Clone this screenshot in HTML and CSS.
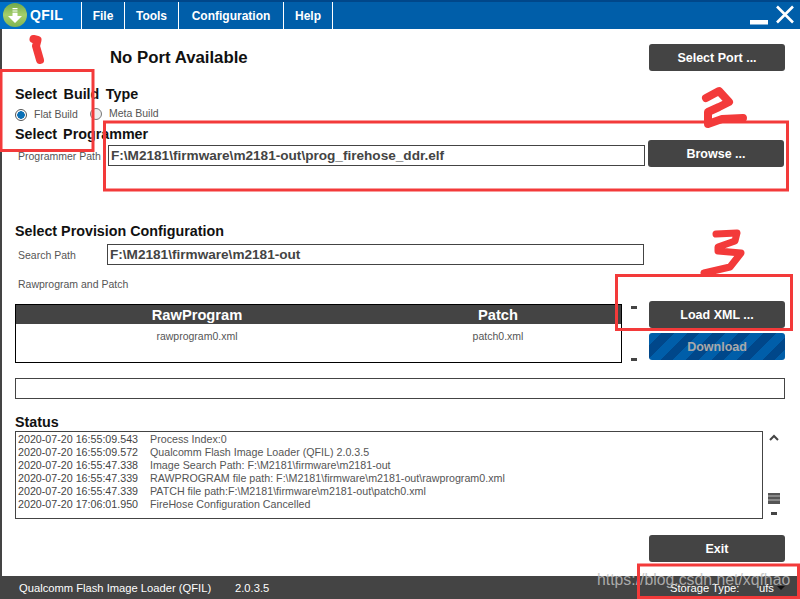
FILE: index.html
```html
<!DOCTYPE html>
<html lang="en">
<head>
<meta charset="utf-8">
<title>QFIL</title>
<link rel="stylesheet" href="styles.css">
</head>
<body>
<div class="window">
  <header class="titlebar">
    <div class="brand">
      <svg class="logo" viewBox="0 0 24 24" width="24" height="24">
        <defs><linearGradient id="g" x1="0" y1="0" x2="0" y2="1"><stop offset="0" stop-color="#6fa84a"/><stop offset="0.5" stop-color="#a5cf6a"/><stop offset="1" stop-color="#7fb552"/></linearGradient></defs>
        <circle cx="12" cy="12" r="12" fill="url(#g)"/>
        <path d="M9.5 5h5v1.2h-5zM9.5 7.4h5v1.2h-5zM9.5 9.8h5V13H19l-7 7-7-7h4.500z" fill="#fff"/>
      </svg>
      <span class="brand-name">QFIL</span>
    </div>
    <nav class="menu">
      <span class="menu-item m-file">File</span>
      <span class="menu-item m-tools">Tools</span>
      <span class="menu-item m-config">Configuration</span>
      <span class="menu-item m-help">Help</span>
    </nav>
    <div class="win-controls">
      <svg width="46" height="24" viewBox="0 0 46 24">
        <rect x="0" y="15" width="18" height="4.500" fill="#fff"/>
        <path d="M27 1.500L43 17.500M43 1.500L27 17.500" stroke="#fff" stroke-width="2.600" fill="none"/>
      </svg>
    </div>
  </header>

  <main class="content">
    <section class="row port-row">
      <h1 class="port-status">No Port Available</h1>
      <button class="btn" type="button">Select Port ...</button>
    </section>

    <h2 class="heading h-build">Select Build Type</h2>
    <div class="radios">
      <label class="radio-item r-flat"><span class="radio checked"></span>Flat Build</label>
      <label class="radio-item r-meta"><span class="radio"></span>Meta Build</label>
    </div>
    <h2 class="heading h-prog">Select Programmer</h2>
    <section class="row prog-row">
      <span class="field-label prog-label">Programmer Path</span>
      <div class="path-box prog-box">F:\M2181\firmware\m2181-out\prog_firehose_ddr.elf</div>
      <button class="btn btn-browse" type="button">Browse ...</button>
    </section>

    <h2 class="heading h-prov">Select Provision Configuration</h2>
    <section class="row search-row">
      <span class="field-label search-label">Search Path</span>
      <div class="path-box search-box">F:\M2181\firmware\m2181-out</div>
    </section>
    <p class="field-label raw-label">Rawprogram and Patch</p>

    <section class="row xml-row">
      <div class="table">
        <div class="table-head"><span class="col-raw">RawProgram</span><span class="col-patch">Patch</span></div>
        <div class="table-body"><span class="col-raw">rawprogram0.xml</span><span class="col-patch">patch0.xml</span></div>
      </div>
      <div class="table-scroll"><span class="dash"></span><span class="dash"></span></div>
      <div class="xml-buttons">
        <button class="btn" type="button">Load XML ...</button>
        <button class="btn btn-download" type="button">Download</button>
      </div>
    </section>

    <div class="progress"></div>

    <h2 class="heading h-status">Status</h2>
    <section class="row status-row">
      <div class="log">
        <div class="log-line"><span>2020-07-20 16:55:09.543</span><span>Process Index:0</span></div>
        <div class="log-line"><span>2020-07-20 16:55:09.572</span><span>Qualcomm Flash Image Loader (QFIL) 2.0.3.5</span></div>
        <div class="log-line"><span>2020-07-20 16:55:47.338</span><span>Image Search Path: F:\M2181\firmware\m2181-out</span></div>
        <div class="log-line"><span>2020-07-20 16:55:47.339</span><span>RAWPROGRAM file path: F:\M2181\firmware\m2181-out\rawprogram0.xml</span></div>
        <div class="log-line"><span>2020-07-20 16:55:47.339</span><span>PATCH file path:F:\M2181\firmware\m2181-out\patch0.xml</span></div>
        <div class="log-line"><span>2020-07-20 17:06:01.950</span><span>FireHose Configuration Cancelled</span></div>
      </div>
      <div class="scrollbar">
        <svg width="10" height="7" viewBox="0 0 10 7"><path d="M1 6L5 2L9 6" stroke="#444" stroke-width="2" fill="none"/></svg>
        <span class="thumb"></span>
        <span class="dash"></span>
      </div>
    </section>
    <div class="exit-row"><button class="btn" type="button">Exit</button></div>
  </main>

  <footer class="statusbar">
    <span class="app-name">Qualcomm Flash Image Loader (QFIL)</span>
    <span class="app-ver">2.0.3.5</span>
    <span class="storage">Storage Type:</span>
    <span class="storage-val">ufs</span>
    <span class="caret"></span>
  </footer>
</div>

<div class="watermark">https://blog.csdn.net/xqfhao</div>
<svg class="marks" width="800" height="599" viewBox="0 0 800 599">
  <g fill="none" stroke="#f33a3a" stroke-width="3">
    <rect x="1" y="70.500" width="92" height="80"/>
    <rect x="104.500" y="122" width="683" height="68"/>
    <rect x="616.500" y="275.500" width="175" height="54"/>
    <rect x="638.500" y="565" width="160" height="32.500"/>
  </g>
  <g fill="none" stroke="#f33a3a" stroke-linecap="round" stroke-linejoin="round">
    <path d="M33.500 39L37.500 40L36 46L40 60" stroke-width="8"/>
    <path d="M706 98L719 91L729 102L719 107L708 112L708 124L722 119L743 118" stroke-width="8"/>
    <path d="M716 234L737 233L735 241L718 247L718 251L741 253L730 267L704 273" stroke-width="7"/>
  </g>
</svg>
</body>
</html>
```

FILE: styles.css
```css
* { box-sizing: border-box; }
html, body { margin: 0; padding: 0; }
body {
  width: 800px;
  height: 599px;
  overflow: hidden;
  position: relative;
  background: #fff;
  font-family: "Liberation Sans", Arial, sans-serif;
  font-size: 11px;
  color: #444;
}
.window { display: flex; flex-direction: column; height: 599px; }

/* title bar */
.titlebar {
  height: 29px;
  flex: none;
  display: flex;
  background: #005ea9;
  border-top: 2px solid #00478a;
  color: #fff;
}
.brand {
  width: 82px;
  display: flex;
  align-items: flex-start;
  background: #0070c8;
  border-right: 1px solid #fff;
  padding: 1px 0 0 3px;
}
.brand-name { font-weight: 700; font-size: 14px; margin: 4px 0 0 3px; letter-spacing: 0.3px; }
.menu { display: flex; }
.menu-item {
  display: flex;
  align-items: center;
  justify-content: center;
  font-weight: 700;
  font-size: 12px;
  border-right: 1px solid #fff;
}
.m-file { width: 43px; }
.m-tools { width: 54px; }
.m-config { width: 105px; }
.m-help { width: 49px; }
.win-controls { margin-left: auto; padding: 3px 4px 0 0; }

/* body */
.content {
  flex: 1;
  border-left: 2px solid #444;
  padding-left: 13px;
  display: flex;
  flex-direction: column;
  align-items: flex-start;
}
.row { display: flex; width: 770px; }
.heading { margin: 0; font-size: 14.300px; line-height: 15px; font-weight: 700; color: #111; }
.btn {
  width: 136px;
  height: 27px;
  flex: none;
  padding: 0;
  border: 0;
  border-radius: 3px;
  background: #444;
  color: #fff;
  font: 700 12.500px "Liberation Sans", Arial, sans-serif;
}
.port-row { margin-top: 15px; justify-content: space-between; align-items: center; }
.port-status { margin: 1px 0 0 95px; font-size: 16.800px; line-height: 20px; font-weight: 700; color: #111; }
.h-build { margin-top: 16px; word-spacing: 2.500px; }
.radios { display: flex; height: 17px; margin-top: 3px; color: #555; }
.radio-item { display: flex; align-items: center; font-size: 10.500px; }
.r-flat { margin-left: 0; width: 75px; padding-top: 1px; }
.r-meta { padding-bottom: 1px; }
.radio {
  width: 12px;
  height: 12px;
  border-radius: 50%;
  border: 1px solid #777;
  background: #eee;
  margin-right: 7px;
  margin-top: 1px;
  flex: none;
}
.radio.checked { background: radial-gradient(circle, #0a6fb5 0 3.500px, #fff 4px); border-color: #555; }
.h-prog { margin-top: 5px; word-spacing: 2px; }
.prog-row { align-items: flex-start; height: 27px; margin-top: -2px; }
.field-label { font-size: 10.500px; color: #555; white-space: nowrap; }
.prog-label { flex: none; width: 90px; margin: 10px 0 0 3px; line-height: 13px; }
.path-box {
  flex: none;
  height: 21px;
  border: 1px solid #444;
  background: #fff;
  font: 700 13.600px/19px "Liberation Sans", Arial, sans-serif;
  color: #444;
  padding-left: 2px;
  white-space: nowrap;
}
.prog-box { width: 537px; margin-top: 5px; }
.btn-browse { margin-left: 3px; }
.h-prov { margin-top: 57px; }
.search-row { margin-top: 5px; align-items: flex-start; height: 21px; }
.search-label { flex: none; width: 89px; margin: 5px 0 0 3px; line-height: 13px; }
.search-box { width: 537px; }
.raw-label { margin: 13px 0 0 3px; line-height: 13px; }

.xml-row { margin-top: 13px; height: 59px; align-items: flex-start; position: relative; }
.table { width: 607px; height: 59px; border: 1px solid #000; flex: none; }
.table-head {
  height: 19px;
  background: #444;
  color: #fff;
  font-weight: 700;
  font-size: 14.700px;
  line-height: 20px;
  display: flex;
}
.table-body { display: flex; font-size: 10.500px; line-height: 13px; padding-top: 6px; color: #555; }
.col-raw { width: 362px; text-align: center; }
.col-patch { width: 240px; text-align: center; padding-left: 0; }
.table-scroll {
  width: 8px;
  height: 55px;
  margin: 2px 0 0 9px;
  display: flex;
  flex-direction: column;
  justify-content: space-between;
  flex: none;
}
.dash { display: block; width: 6px; height: 3px; background: #444; flex: none; }
.xml-buttons { display: flex; flex-direction: column; gap: 5px; margin: -3px 0 0 10px; flex: none; }
.btn-download {
  background: repeating-linear-gradient(135deg, #005ea9 0 9px, #00478a 9px 18px);
  color: #a9a9a9;
}
.progress { width: 770px; height: 21px; border: 1px solid #444; margin-top: 15px; }
.h-status { margin-top: 16px; }
.status-row { margin-top: 1px; height: 88px; align-items: flex-start; }
.log {
  width: 748px;
  height: 88px;
  border: 1px solid #444;
  padding: 1px 0 0 2px;
  font-size: 10.700px;
  line-height: 13px;
  color: #555;
  flex: none;
}
.log-line { display: flex; white-space: nowrap; }
.log-line span:first-child { width: 132px; flex: none; color: #444; }
.scrollbar {
  width: 12px;
  margin-left: 5px;
  height: 88px;
  display: flex;
  flex-direction: column;
  align-items: center;
}
.scrollbar svg { margin-top: 3px; flex: none; }
.thumb {
  display: block;
  width: 12px;
  height: 11px;
  margin-top: 52px;
  background: linear-gradient(180deg, #555 0 2px, #888 2px 4px, #555 4px 6px, #888 6px 8px, #555 8px);
  flex: none;
}
.scrollbar .dash { margin-top: 8px; }
.exit-row { width: 770px; margin-top: 16px; display: flex; justify-content: flex-end; }

/* footer */
.statusbar {
  height: 23px;
  flex: none;
  background: #444;
  color: #fff;
  display: flex;
  align-items: center;
  font-size: 11.200px;
  padding-left: 19px;
  position: relative;
  white-space: nowrap;
}
.app-name { width: 216px; }
.app-ver { width: 435px; }
.storage { width: 89px; }
.caret {
  width: 0;
  height: 0;
  margin-left: 3px;
  border: 4px solid transparent;
  border-top-color: #111;
  border-bottom-width: 0;
}

/* overlays */
.watermark {
  position: absolute;
  left: 597px;
  top: 570px;
  font-size: 15.800px;
  line-height: 20px;
  color: rgba(190, 190, 190, 0.85);
  white-space: nowrap;
}
.marks { position: absolute; left: 0; top: 0; pointer-events: none; }
```
